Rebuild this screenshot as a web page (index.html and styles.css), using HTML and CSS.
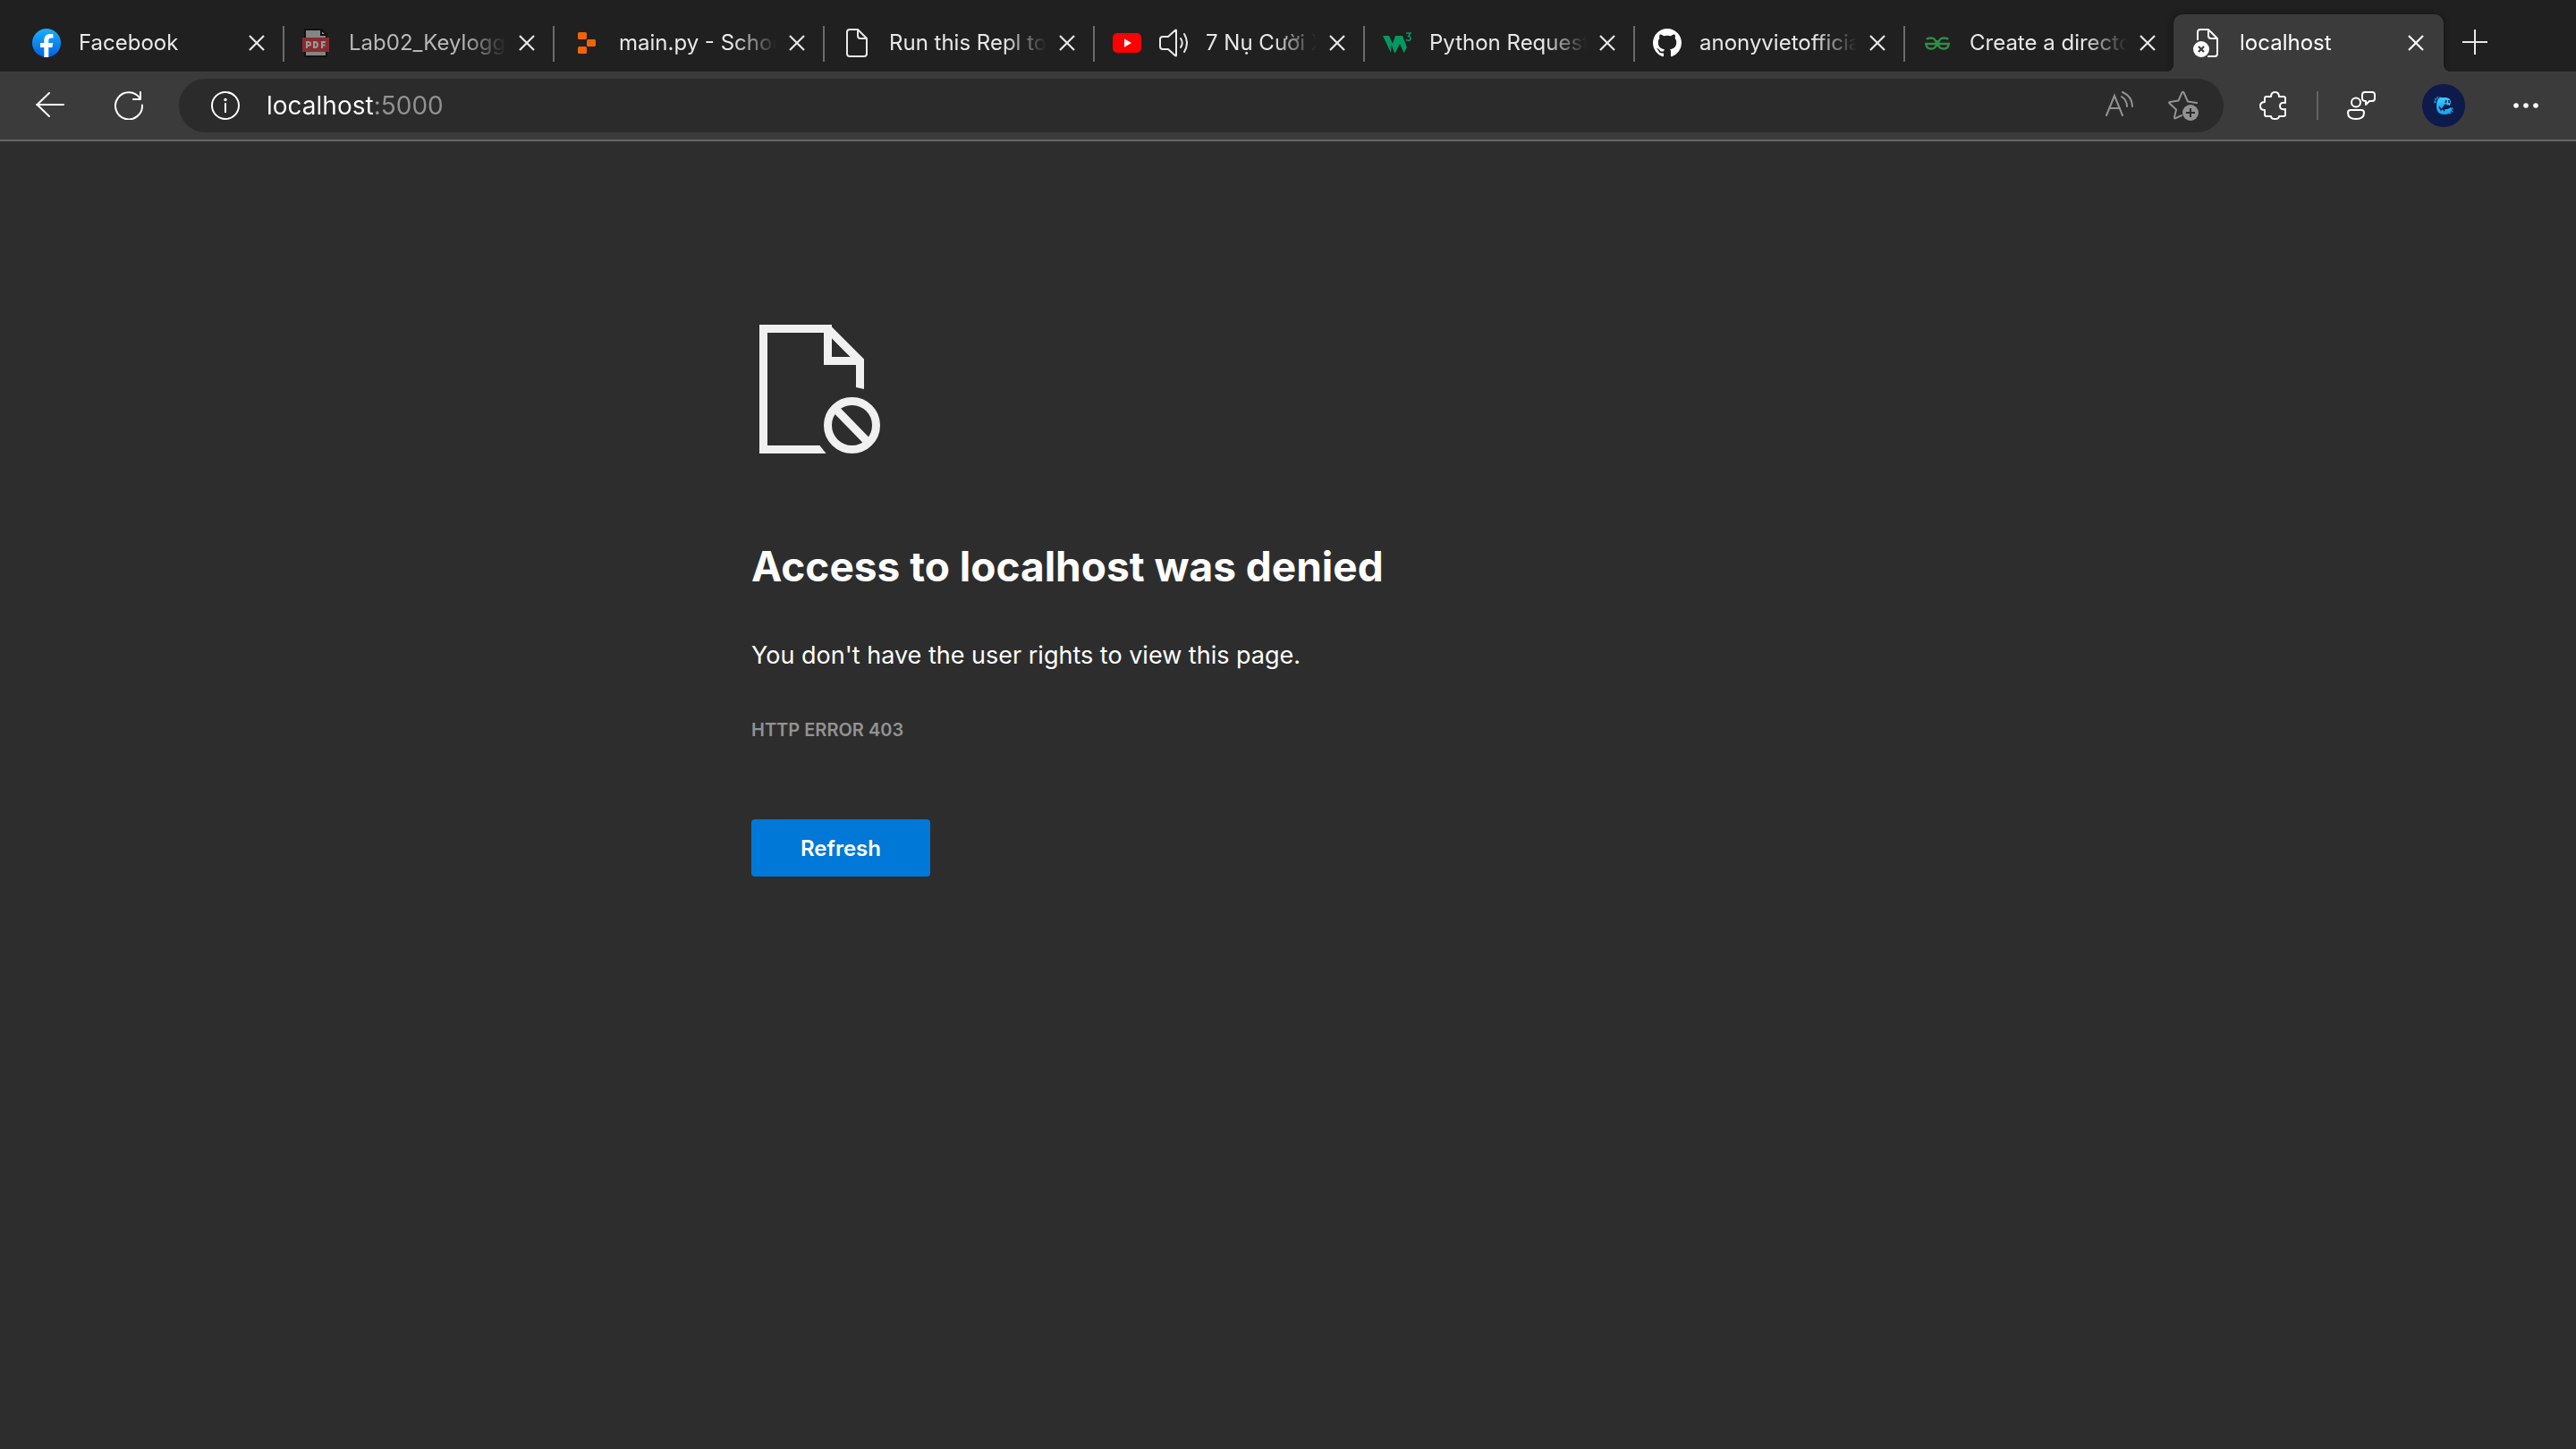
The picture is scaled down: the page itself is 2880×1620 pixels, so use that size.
FILE: index.html
```html
<!DOCTYPE html>
<html lang="en">
<head>
<meta charset="utf-8">
<title>localhost</title>
<link rel="stylesheet" href="styles.css">
</head>
<body>
<svg class="symbols" aria-hidden="true">
  <symbol id="close" viewBox="0 0 20 20"><path d="M2 2l16 16M18 2L2 18" fill="none" stroke="currentColor" stroke-width="2.2"/></symbol>
</svg>
<header class="browser">
  <nav class="tabstrip" aria-label="Open tabs">
    <ul class="tabs">
      <li class="tab">
        <svg class="favicon" viewBox="0 0 32 32" aria-hidden="true"><defs><linearGradient id="fb" x1="0" y1="0" x2="0" y2="1"><stop offset="0" stop-color="#1aafff"/><stop offset="1" stop-color="#0062e0"/></linearGradient></defs><circle cx="16" cy="16" r="16" fill="url(#fb)"/><path d="M13.3 32V21H9v-5h4.300v-2.800c0-4.600 2.700-7.200 6.700-7.200 1.200 0 2.300.1 3.400.3v4.200h-2.200c-2.100 0-2.900 1.200-2.900 2.700V16h4.900l-.8 5h-4.100v10.800Q16 32.200 13.300 32z" fill="#fff"/></svg>
        <a class="title" href="#facebook">Facebook</a>
        <button class="close" aria-label="Close Facebook"><svg><use href="#close"/></svg></button>
      </li>
      <li class="tab asleep">
        <svg class="favicon" viewBox="0 0 32 32" aria-hidden="true"><path d="M2 0h20l6 6v26H2z" fill="#111"/><path d="M4 2h16v6h6v22H4z" fill="#858585"/><path d="M22 3.500V6h3z" fill="#999"/><path d="M0 10h30v16H0z" fill="#862c30"/><path d="M5 22v-7h2a2 2 0 0 1 0 4H5M13 15v6h1q3 0 3-3t-3-3zM22 22v-7h4M22 18.500h3.500" fill="none" stroke="#999" stroke-width="2"/></svg>
        <a class="title" href="#lab">Lab02_Keylogger</a>
        <button class="close" aria-label="Close Lab02_Keylogger"><svg><use href="#close"/></svg></button>
      </li>
      <li class="tab">
        <svg class="favicon" viewBox="0 0 32 32" aria-hidden="true"><g fill="#f26207"><rect x="6" y="4" width="10" height="8" rx="1.500"/><rect x="16" y="12" width="10" height="8" rx="1.500"/><rect x="6" y="20" width="10" height="8" rx="1.500"/></g></svg>
        <a class="title" href="#main">main.py - School</a>
        <button class="close" aria-label="Close main.py"><svg><use href="#close"/></svg></button>
      </li>
      <li class="tab">
        <svg class="favicon" viewBox="0 0 32 32" aria-hidden="true"><path d="M8 1h9l10 10v17q0 3-3 3H8q-3 0-3-3V4q0-3 3-3zM17 1v7q0 3 3 3h7" fill="none" stroke="#e8e8e8" stroke-width="2"/></svg>
        <a class="title" href="#repl">Run this Repl to see</a>
        <button class="close" aria-label="Close Run this Repl"><svg><use href="#close"/></svg></button>
      </li>
      <li class="tab">
        <svg class="favicon" viewBox="0 0 32 32" aria-hidden="true"><rect y="5" width="32" height="22" rx="5" fill="#f00"/><path d="M13 11.300v9.400l8-4.700z" fill="#fff"/></svg>
        <svg class="audio" viewBox="0 0 32 32" role="img" aria-label="Playing audio"><path d="M19 2v28q0 1-1 .3L10 23H4q-3 0-3-3v-8q0-3 3-3h6l8-7.300Q19 1 19 2zM24 11q3.500 5 0 10M28 6q6 10 0 20" fill="none" stroke="#e8e8e8" stroke-width="2" stroke-linecap="round"/></svg>
        <a class="title" href="#music">7 Nụ Cười Xuân</a>
        <button class="close" aria-label="Close 7 Nụ Cười"><svg><use href="#close"/></svg></button>
      </li>
      <li class="tab">
        <svg class="favicon" viewBox="0 0 32 32" aria-hidden="true"><path d="M0 8h7l4 9 3-9h8l5 13-3.500 6-4.500-10-5 10h-1l-3.500-9L9 27z" fill="#059862"/><path d="M26 5h5l-2.500 3.500q2.500.2 2.500 2.500t-2.500 2.300q-1.500 0-2.500-1" fill="none" stroke="#059862" stroke-width="1.600"/></svg>
        <a class="title" href="#requests">Python Requests</a>
        <button class="close" aria-label="Close Python Requests"><svg><use href="#close"/></svg></button>
      </li>
      <li class="tab">
        <svg class="favicon" viewBox="0 0 16 16" aria-hidden="true"><path fill="#fff" d="M8 0C3.580 0 0 3.580 0 8c0 3.540 2.290 6.530 5.470 7.590.4.070.55-.17.55-.38 0-.19-.01-.82-.01-1.490-2.010.37-2.530-.49-2.690-.94-.09-.23-.48-.94-.82-1.130-.28-.15-.68-.52-.01-.53.63-.01 1.080.58 1.230.82.720 1.210 1.870.87 2.330.66.070-.52.280-.87.510-1.070-1.780-.2-3.640-.89-3.640-3.950 0-.87.310-1.590.82-2.150-.08-.2-.36-1.020.08-2.120 0 0 .67-.21 2.200.82.640-.18 1.320-.27 2-.27s1.360.09 2 .27c1.530-1.040 2.200-.82 2.200-.82.440 1.100.16 1.920.08 2.120.51.560.82 1.270.82 2.150 0 3.070-1.870 3.750-3.650 3.950.29.250.54.730.54 1.480 0 1.070-.01 1.930-.01 2.200 0 .21.15.46.55.38A8.010 8.010 0 0 0 16 8c0-4.420-3.580-8-8-8z"/></svg>
        <a class="title" href="#github">anonyvietofficial</a>
        <button class="close" aria-label="Close anonyvietofficial"><svg><use href="#close"/></svg></button>
      </li>
      <li class="tab">
        <svg class="favicon" viewBox="0 0 32 32" aria-hidden="true"><g fill="none" stroke="#2f8d46" stroke-width="2.400"><path d="M4 12q1-1.500 5-1.500 5 0 6 6.500-.5 5.500-6 5.500T3.500 17M28 12q-1-1.500-5-1.500-5 0-6 6.500.5 5.500 6 5.500t5.500-5.500"/><path d="M2 17h28M16 13v7"/></g></svg>
        <a class="title" href="#directory">Create a directory</a>
        <button class="close" aria-label="Close Create a directory"><svg><use href="#close"/></svg></button>
      </li>
      <li class="tab active">
        <svg class="favicon" viewBox="0 0 32 32" aria-hidden="true"><path d="M5 13V4q0-3 3-3h9l10 10v17q0 3-3 3h-8M17 1v7q0 3 3 3h7" fill="none" stroke="#fff" stroke-width="2"/><circle cx="9" cy="23" r="10.500" fill="#3b3b3b"/><circle cx="9" cy="23" r="9" fill="#fff"/><path d="M6 20l6 6M12 20l-6 6" stroke="#3b3b3b" stroke-width="2.200"/></svg>
        <a class="title" href="#localhost" aria-current="page">localhost</a>
        <button class="close" aria-label="Close localhost"><svg><use href="#close"/></svg></button>
      </li>
    </ul>
    <button class="newtab" aria-label="New tab"><svg viewBox="0 0 28 28"><path d="M14 0v28M0 14h28" stroke="#e8e8e8" stroke-width="2"/></svg></button>
  </nav>
  <div class="toolbar">
    <button class="tool" aria-label="Back"><svg viewBox="0 0 32 32"><path d="M31 15H1M15 2L1.500 15 15 28" fill="none" stroke="#fff" stroke-width="2" stroke-linecap="round" stroke-linejoin="round"/></svg></button>
    <button class="tool reload" aria-label="Reload"><svg viewBox="0 0 32 32"><path d="M31 15.500A15 15 0 1 1 28.500 8M29 1v8h-8" fill="none" stroke="#fff" stroke-width="2" stroke-linecap="round" stroke-linejoin="round"/></svg></button>
    <form class="omnibox">
      <button type="button" class="tool" aria-label="View site information"><svg viewBox="0 0 32 32"><circle cx="16" cy="16" r="15" fill="none" stroke="#fff" stroke-width="2"/><path d="M16 13v11" stroke="#fff" stroke-width="2"/><circle cx="16" cy="9.500" r="1.700" fill="#fff"/></svg></button>
      <input class="url" type="text" value="localhost:5000" aria-label="Address">
      <button type="button" class="tool" aria-label="Read aloud"><svg viewBox="0 0 32 32"><path d="M2 27L11 5l9 22M5 19h12M19 6q6 4 6 11M20 1q11 5 11 16" fill="none" stroke="#929292" stroke-width="2" stroke-linecap="round"/></svg></button>
      <button type="button" class="tool star" aria-label="Add to favorites"><svg viewBox="0 0 34 34"><path d="M32 14l-10-1.500L17.500 2.500Q16.500 1 15.500 2.500L11.500 11.500 2 13q-1.500.5-.5 1.500L9 21.500 7 30q0 2 1.500 1.200L15 28" fill="none" stroke="#929292" stroke-width="2" stroke-linecap="round" stroke-linejoin="round"/><circle cx="25" cy="25" r="9" fill="#929292"/><path d="M25 20v10M20 25h10" stroke="#2b2b2b" stroke-width="2"/></svg></button>
    </form>
    <button class="tool extensions" aria-label="Extensions"><svg viewBox="0 0 32 32"><path d="M8 6h5q0-5 4.500-5T22 6h5q2 0 2 2v5q-6-1-6 3.500T29 20v6q0 2-2 2h-5q0 3-4.500 3T13 28H8q-2 0-2-2v-5q-5 0-5-4.500T6 12V8q0-2 2-2z" fill="none" stroke="#fff" stroke-width="2" stroke-linejoin="round"/></svg></button>
    <span class="rule"></span>
    <button class="tool feedback" aria-label="Send feedback"><svg viewBox="0 0 32 32"><g fill="none" stroke="#fff" stroke-width="2" stroke-linejoin="round"><circle cx="10" cy="12.500" r="5"/><path d="M4 21h12q3 0 3 3 0 7-9 7t-9-7q0-3 3-3zM20 1h8q3 0 3 3v4q0 3-3 3h-3l-4 4v-4q-4 0-4-3V4q0-3 3-3z"/></g></svg></button>
    <button class="avatar" aria-label="Profile"><svg viewBox="0 0 48 48"><defs><linearGradient id="av" x1="0" y1="0" x2="0" y2="1"><stop offset="0" stop-color="#3cc8ff"/><stop offset="1" stop-color="#12a2f0"/></linearGradient></defs><path d="M14.500 21q-1-6 6-6M30 32.500q5-1 3-6" fill="none" stroke="#1f86c0" stroke-width="2.500" stroke-dasharray="2 1"/><path d="M20 15h7q5 1 5 5l-1 4-4-1q-1-3-3-2-2 4 0 7 4 1 8-2l1 3q-2 5-8 5-9 0-9-9 0-8 4-10z" fill="url(#av)"/><path d="M22 17h5q2 1 1 4l-3 2-4 5-3-3z" fill="url(#av)"/><path d="M27 18l-1 3M30 18v3M19 25l2 4 2-2 2 3M24 24l3 1h5" fill="none" stroke="#0d1a4a" stroke-width="1.500"/></svg></button>
    <button class="tool" aria-label="Settings and more"><svg viewBox="0 0 32 32"><g fill="#fff"><circle cx="5" cy="16" r="2.800"/><circle cx="16" cy="16" r="2.800"/><circle cx="27" cy="16" r="2.800"/></g></svg></button>
  </div>
</header>
<main class="page">
  <svg class="denied" viewBox="0 0 144 144" aria-hidden="true"><g fill="none" stroke="#f0f0f0" stroke-width="9"><path d="M69 139.500H13.500V4.500H85.500V40.500H122"/><circle cx="112.500" cy="112.500" r="27"/><path d="M94 94l36 37"/></g><path d="M81 0h6.500L126 38.500V72l-9-2V45L90 15.500z" fill="#f0f0f0"/><path d="M90 15.500V36h20.500z" fill="#2d2d2d"/><path d="M69 135h7.500l7 9H69z" fill="#f0f0f0"/></svg>
  <h1>Access to localhost was denied</h1>
  <p class="message">You don't have the user rights to view this page.</p>
  <p class="code">HTTP ERROR 403</p>
  <button class="refresh">Refresh</button>
</main>
</body>
</html>
```

FILE: styles.css
```css
* { box-sizing: border-box; }
body {
  margin: 0;
  min-height: 100vh;
  background: #2d2d2d;
  color: #fff;
  font-family: Inter, "Noto Sans", sans-serif;
}
button {
  border: 0;
  padding: 0;
  background: none;
  color: inherit;
  font: inherit;
}
svg { display: block; }
.symbols { position: absolute; width: 0; height: 0; }

.tabstrip {
  display: flex;
  align-items: flex-end;
  height: 80px;
  padding-left: 14px;
  background: #202020;
}
.tabs {
  display: flex;
  min-width: 0;
  margin: 0;
  padding: 0;
  list-style: none;
}
.tab {
  position: relative;
  display: flex;
  align-items: center;
  flex: 0 1 302px;
  width: 302px;
  min-width: 0;
  height: 64px;
  padding: 0 19px 0 22px;
  color: #e8e8e8;
}
.tab:not(.active)::after {
  content: "";
  position: absolute;
  right: -2px;
  top: 13px;
  width: 2px;
  height: 40px;
  background: #6b6b6b;
}
.tab:nth-last-child(2)::after { display: none; }
.favicon, .audio { flex: none; width: 32px; height: 32px; }
.audio { margin-left: 20px; }
.title {
  flex: 1;
  min-width: 0;
  margin-left: 20px;
  overflow: hidden;
  color: inherit;
  font-size: 24px;
  line-height: 32px;
  text-decoration: none;
  white-space: nowrap;
  -webkit-mask-image: linear-gradient(to left, transparent, #000 48px);
  mask-image: linear-gradient(to left, transparent, #000 48px);
}
.asleep .title { color: #b8b8b8; }
.close {
  flex: none;
  width: 20px;
  height: 20px;
  margin-left: 13px;
}
.close svg { width: 20px; height: 20px; }
.active {
  padding-right: 21px;
  border-radius: 10px 10px 0 0;
  background: #3b3b3b;
  box-shadow: 0 0 6px #141414;
  clip-path: inset(-8px -8px 0 -8px);
  color: #fff;
}
.active::before, .active::after {
  content: "";
  position: absolute;
  bottom: 0;
  width: 8px;
  height: 8px;
}
.active::before { right: 100%; background: radial-gradient(circle at 0 0, transparent 8px, #3b3b3b 8px); }
.active::after { left: 100%; background: radial-gradient(circle at 100% 0, transparent 8px, #3b3b3b 8px); }
.newtab { width: 28px; height: 28px; margin: 0 20px 19px 21px; }

.toolbar {
  display: flex;
  align-items: center;
  height: 78px;
  padding: 0 40px;
  border-bottom: 2px solid #666;
  background: #3b3b3b;
}
.tool { flex: none; width: 32px; height: 32px; }
.reload { margin: 0 40px 0 56px; }
.omnibox {
  display: flex;
  align-items: center;
  flex: 1;
  min-width: 0;
  height: 60px;
  padding: 0 28px 0 36px;
  border-radius: 30px;
  background: #2b2b2b;
}
.url {
  flex: 1;
  min-width: 0;
  margin: 0 24px 0 30px;
  padding: 0;
  border: 0;
  outline: 0;
  background: linear-gradient(90deg, #fff 122px, #929292 122px);
  -webkit-background-clip: text;
  background-clip: text;
  color: #fff;
  -webkit-text-fill-color: transparent;
  font: inherit;
  font-size: 28px;
  line-height: 36px;
}
.star { width: 34px; height: 34px; margin-left: 39px; }
.extensions { margin-left: 40px; }
.rule { width: 2px; height: 32px; margin: 0 32px; background: #626262; }
.avatar {
  flex: none;
  width: 48px;
  height: 48px;
  margin: 0 52px;
  border-radius: 50%;
  background: #0d1a4a;
}

.page {
  max-width: 1200px;
  margin: 0 auto;
  padding-top: 205px;
}
.denied { width: 144px; height: 144px; }
h1 {
  margin: 96px 0 0;
  font-size: 46px;
  font-weight: 700;
  line-height: 60px;
}
.message {
  margin: 50px 0 0;
  font-size: 27px;
  line-height: 40px;
}
.code {
  margin: 48px 0 0;
  color: #929292;
  font-size: 20px;
  font-weight: 600;
  line-height: 30px;
}
.refresh {
  width: 200px;
  height: 64px;
  margin-top: 85px;
  border-radius: 4px;
  background: #0078d7;
  font-size: 24px;
  font-weight: 600;
}
```
